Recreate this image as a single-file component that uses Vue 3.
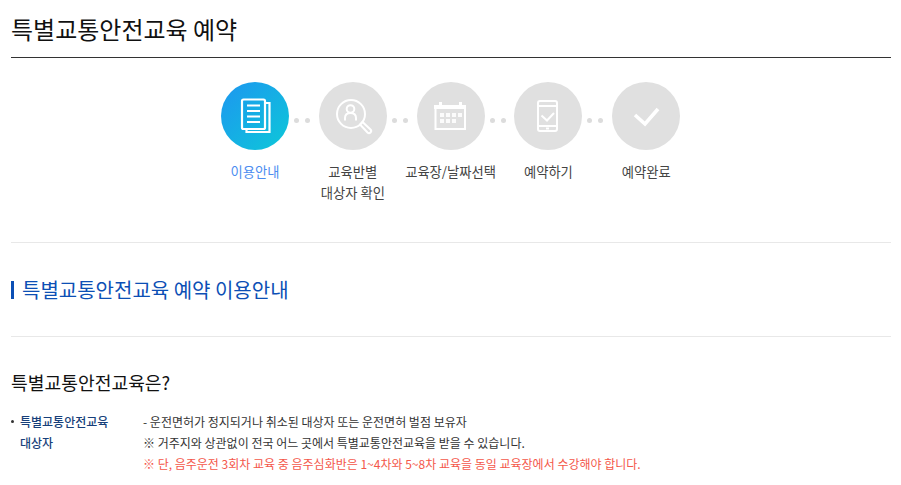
<template>
  <div class="page">
    <h1 class="title">특별교통안전교육 예약</h1>
    <ol class="steps">
      <li v-for="(s, i) in steps" :key="s.key" class="step" :class="{ active: i === 0 }">
        <div class="circle-row">
          <div class="circle">
            <svg v-if="s.key === 'doc'" viewBox="0 0 68 68" class="ico" fill="none" stroke="#fff" stroke-width="2.2">
              <path d="M44 21h4.500v29h-23v-3" />
              <rect x="21" y="17.500" width="23" height="29.500" rx="1.500" />
              <path d="M26 23.500h13M26 29h13M26 34.500h13M26 40h13" stroke-width="2.200" />
            </svg>
            <svg v-else-if="s.key === 'search'" viewBox="0 0 68 68" class="ico" fill="none" stroke="#fff" stroke-width="2">
              <circle cx="32" cy="32" r="14" />
              <circle cx="31.500" cy="27" r="3.800" />
              <path d="M26 38.500v-2.500c0-3.500 2.500-5 5.500-5s5.500 1.500 5.500 5v2.500" />
              <path d="M41 42.500l2.500-2.500 8 7.500c1 1 1 2 0 3s-2 1-3 0z" />
            </svg>
            <svg v-else-if="s.key === 'cal'" viewBox="0 0 68 68" class="ico" fill="none" stroke="#fff" stroke-width="2">
              <path d="M18.500 27v20h29.500v-20" />
              <path d="M17 23h32v4H17z" fill="#fff" stroke="none" />
              <path d="M23.500 20v4M43.500 20v4" stroke-width="3" />
              <path d="M23 33h4M29 33h4M35 33h4M41 33h4M23 39h4M29 39h4M35 39h4" stroke-width="4" opacity="0.85" />
            </svg>
            <svg v-else-if="s.key === 'phone'" viewBox="0 0 68 68" class="ico" fill="none" stroke="#fff" stroke-width="2">
              <rect x="24" y="19" width="19" height="30" rx="2" />
              <path d="M24 24h19M24 44h19" />
              <path d="M27.500 33.500l5.500 5 7-7.500" />
              <path d="M32 46.500h3" stroke-width="2" />
            </svg>
            <svg v-else viewBox="0 0 68 68" class="ico" fill="none" stroke="#fff" stroke-width="3.600">
              <path d="M23 33l10 9 13-15" />
            </svg>
          </div>
          <div v-if="i < steps.length - 1" class="dots"><span></span><span></span></div>
        </div>
        <div class="label">
          <span v-for="line in s.lines" :key="line">{{ line }}</span>
        </div>
      </li>
    </ol>
    <div class="section-head">
      <h2 class="section-title">특별교통안전교육 예약 이용안내</h2>
    </div>
    <h3 class="sub">특별교통안전교육은?</h3>
    <div class="info">
      <div class="info-label">특별교통안전교육<br />대상자</div>
      <div class="info-body">
        <p>- 운전면허가 정지되거나 취소된 대상자 또는 운전면허 벌점 보유자</p>
        <p>※ 거주지와 상관없이 전국 어느 곳에서 특별교통안전교육을 받을 수 있습니다.</p>
        <p class="warn">※ 단, 음주운전 3회차 교육 중 음주심화반은 1~4차와 5~8차 교육을 동일 교육장에서 수강해야 합니다.</p>
      </div>
    </div>
  </div>
</template>

<script setup>
const steps = [
  { key: 'doc', lines: ['이용안내'] },
  { key: 'search', lines: ['교육반별', '대상자 확인'] },
  { key: 'cal', lines: ['교육장/날짜선택'] },
  { key: 'phone', lines: ['예약하기'] },
  { key: 'check', lines: ['예약완료'] }
]
</script>

<style>
html, body { margin: 0; background: #fff; }
</style>

<style scoped>
.page {
  width: 880px;
  height: 485px;
  overflow: hidden;
  margin-left: 11px;
  font-family: "Noto Sans CJK KR", "Noto Sans", sans-serif;
  color: #333;
}
.title {
  margin: 0;
  height: 58px;
  box-sizing: border-box;
  border-bottom: 1px solid #333;
  font-size: 24px;
  font-weight: 400;
  line-height: 58px;
  color: #111;
}
.steps {
  list-style: none;
  margin: 0;
  padding: 24px 0 0 199px;
  display: flex;
  height: 185px;
  box-sizing: border-box;
  border-bottom: 1px solid #e8e8e8;
}
.step {
  width: 97.800px;
  display: flex;
  flex-direction: column;
}
.circle-row {
  display: flex;
  align-items: center;
  height: 68px;
  padding-left: 11px;
  position: relative;
}
.circle {
  width: 68px;
  height: 68px;
  border-radius: 50%;
  background: #e0e0e0;
  flex: none;
}
.active .circle {
  background: linear-gradient(135deg, #1d96f0, #0dc8d8);
}
.ico { display: block; width: 68px; height: 68px; }
.dots {
  display: flex;
  gap: 6px;
  margin-left: 5px;
  margin-top: 8px;
}
.dots span {
  width: 5px;
  height: 5px;
  border-radius: 50%;
  background: #dcdcdc;
}
.label {
  width: 120px;
  margin-left: -15px;
  margin-top: 11px;
  font-size: 13.300px;
  line-height: 21px;
  text-align: center;
  color: #444;
  display: flex;
  flex-direction: column;
}
.active .label { color: #4b8df0; }
.section-head {
  height: 94px;
  box-sizing: border-box;
  border-bottom: 1px solid #e8e8e8;
  display: flex;
  align-items: center;
}
.section-title {
  margin: 0;
  border-left: 3px solid #0c4fb5;
  padding-left: 8px;
  font-size: 20px;
  font-weight: 400;
  line-height: 18px;
  color: #0c4fb5;
}
.sub {
  margin: 32px 0 0;
  font-size: 18.200px;
  font-weight: 400;
  line-height: 27px;
  color: #111;
}
.info {
  display: flex;
  margin-top: 15px;
  font-size: 12px;
  line-height: 21px;
}
.info-label {
  width: 132px;
  box-sizing: border-box;
  padding-left: 9px;
  color: #173f7a;
  font-weight: 500;
  position: relative;
}
.info-label::before {
  content: "";
  position: absolute;
  left: 0;
  top: 9px;
  width: 3px;
  height: 3px;
  border-radius: 50%;
  background: #333;
}
.info-body p { margin: 0; }
.warn { color: #f4574a; }
</style>
